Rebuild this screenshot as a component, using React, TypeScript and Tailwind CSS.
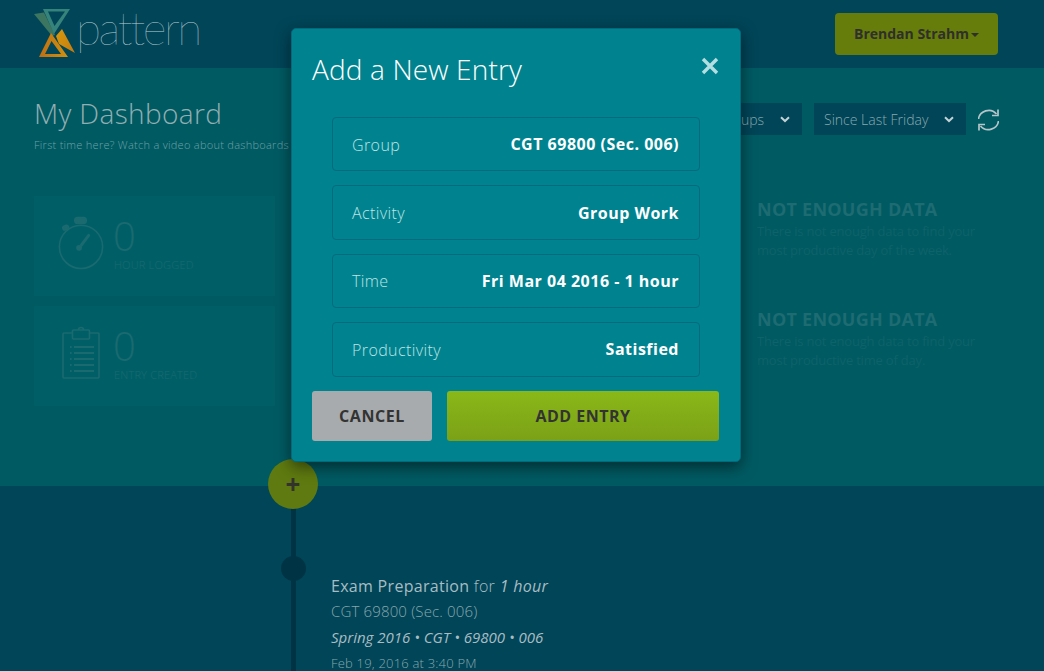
import React from "react";

const Chevron = () => (
  <svg width="10" height="7" viewBox="0 0 10 7" fill="none" stroke="currentColor" strokeWidth="2">
    <path d="M1 1.2 L5 5 L9 1.2" />
  </svg>
);

const Logo = () => (
  <svg width="44" height="50" viewBox="0 0 44 50" className="shrink-0">
    <defs>
      <linearGradient id="org" x1="0" y1="0" x2="1" y2="1">
        <stop offset="0" stopColor="#d89a0c" />
        <stop offset="1" stopColor="#c47a10" />
      </linearGradient>
      <linearGradient id="org2" x1="0" y1="0" x2="1" y2="0">
        <stop offset="0" stopColor="#c06e12" />
        <stop offset="1" stopColor="#cf9210" />
      </linearGradient>
    </defs>
    <path d="M0 5 L10 3.5 L21 26 L18 27 Z" fill="#3c7560" />
    <path fillRule="evenodd" d="M9 0 H36 L20 25 Z M14 2.5 L20.5 17 L31 2.5 Z" fill="#35837b" />
    <path d="M28 20 L41 44 L25 35 L22 27 Z" fill="url(#org)" />
    <path fillRule="evenodd" d="M17 24 L34 48 H5 Z M17.5 32 L11 45 H27 Z" fill="url(#org2)" />
  </svg>
);

const Stopwatch = () => (
  <svg width="50" height="56" viewBox="0 0 50 56" fill="none" stroke="#1b6a70" strokeWidth="1.6" className="mb-[6px]">
    <circle cx="25" cy="32" r="22.5" />
    <rect x="18.5" y="1.5" width="12" height="6" rx="3" fill="#1b6a70" />
    <rect x="6" y="10" width="6" height="4" rx="2" fill="#1b6a70" transform="rotate(-25 9 12)" />
    <path d="M24 32 L33 20" strokeWidth="3" strokeLinecap="round" />
    <circle cx="23" cy="33" r="3" fill="#1b6a70" stroke="none" />
  </svg>
);

const Clipboard = () => (
  <svg width="38" height="54" viewBox="0 0 38 54" fill="none" stroke="#1b6a70" strokeWidth="1.6" className="mb-[9px]">
    <rect x="1" y="8" width="36" height="45" rx="1" />
    <rect x="10.5" y="5" width="17" height="9" rx="1" fill="#005f66" />
    <path d="M16.5 5 a2.5 2.5 0 0 1 5 0" />
    {[22, 28, 34, 40, 46].map((y) => (
      <React.Fragment key={y}>
        <path d={"M12 " + y + " H32"} strokeWidth="2" />
        <path d={"M8 " + y + " H9.6"} strokeWidth="2" />
      </React.Fragment>
    ))}
  </svg>
);

const Refresh = () => (
  <svg width="21" height="24" viewBox="0 0 21 24" fill="none" stroke="#b4c6ca" strokeWidth="1.7" className="mt-[2px]">
    <path d="M0.5 11 C1.5 3 12.5 -1 18.5 6" />
    <path d="M20 1.5 V7.5 H14" />
    <path d="M20.5 13 C19.5 21 8.5 25 2.5 18" />
    <path d="M1 22.5 V16.5 H7" />
  </svg>
);

function Field({ label, value }: { label: string; value: string }) {
  return (
    <div className="flex h-[54.4px] items-center justify-between rounded-[4px] border border-[#006a7e] pl-[19px] pr-5">
      <span className="mt-[1px] text-base font-light tracking-[0.4px] text-[#bfe3e6]">{label}</span>
      <span className="text-base font-bold tracking-[0.5px] text-white">{value}</span>
    </div>
  );
}

function Stat({ icon, value, label }: { icon: React.ReactNode; value: string; label: string }) {
  return (
    <div className="flex h-[100px] w-[241px] items-center gap-[8px] bg-[#005f66] pl-[23px]">
      <div className="flex w-[48px] justify-center">{icon}</div>
      <div className="mb-[5px] flex flex-col">
        <span className="text-[40px] leading-[40px] font-light text-[#1b6a70]">{value}</span>
        <span className="mt-[2px] ml-[1px] text-[11px] leading-[14px] font-light tracking-[0.2px] text-[#1b6a70]">{label}</span>
      </div>
    </div>
  );
}

function Insight({ text }: { text: string }) {
  return (
    <div className="flex w-[240px] flex-col">
      <h3 className="text-lg leading-[20px] font-bold tracking-[0.25px] text-[#1e6b72]">NOT ENOUGH DATA</h3>
      <p className="mt-[3px] text-[13px] leading-[19px] tracking-[-0.2px] text-[#0e6269]">{text}</p>
    </div>
  );
}

export default function App() {
  return (
    <div
      className="relative flex h-[671px] w-[1044px] flex-col overflow-hidden bg-[#004558]"
      style={{ fontFamily: '"Open Sans", sans-serif' }}
    >
      <header className="flex h-[68px] shrink-0 items-start justify-between pr-[46px] pl-[34px] pt-[9px]">
        <div className="flex items-start">
          <Logo />
          <span className="mt-[-9px] ml-[-2px] text-[46px] leading-[56px] font-thin tracking-[-2.5px] text-[#bccbd0]" style={{ fontFamily: 'Lato, sans-serif' }}>
            pattern
          </span>
        </div>
        <button className="mt-1 flex h-[42px] w-[163px] items-center justify-center gap-[2px] rounded-[4px] bg-[#677d0b] text-sm font-bold text-[#2f2f2b]">
          Brendan Strahm
          <span className="mt-[1px] h-0 w-0 border-x-[4px] border-t-[4px] border-x-transparent border-t-[#2f2f2b]" />
        </button>
      </header>

      <section className="h-[418px] shrink-0 bg-[#005a62] px-[34px] pt-[26px]">
        <div className="flex h-[70px] items-start justify-between pr-[11px]">
          <div>
            <h1 className="text-[28px] leading-[38px] font-light tracking-[0.35px] text-[#93aeb2]">My Dashboard</h1>
            <p className="mt-[5px] text-[11px] leading-[15px] font-light tracking-[0.28px] text-[#6fa0a6]">
              First time here? Watch a video about dashboards
            </p>
          </div>
          <div className="mt-[9px] flex items-center gap-3">
            <div className="flex h-8 w-[150px] items-center justify-end gap-4 bg-[#004558] pr-3 text-sm font-light text-[#8aa8ae]">
              <span className="mt-[1px]">All Groups</span>
              <span className="text-[#c3d2d6]"><Chevron /></span>
            </div>
            <div className="flex h-8 w-[152px] items-center justify-between bg-[#004558] pr-3 pl-[10px] text-sm font-light text-[#8aa8ae]">
              <span className="mt-[1px]">Since Last Friday</span>
              <span className="text-[#c3d2d6]"><Chevron /></span>
            </div>
            <Refresh />
          </div>
        </div>
        <div className="mt-[32px] flex justify-between pr-[13px]">
          <div className="flex flex-col gap-[10px]">
            <Stat icon={<Stopwatch />} value="0" label="HOUR LOGGED" />
            <Stat icon={<Clipboard />} value="0" label="ENTRY CREATED" />
          </div>
          <div className="flex flex-col gap-[49px] pt-[3px]">
            <Insight text="There is not enough data to find your most productive day of the week." />
            <Insight text="There is not enough data to find your most productive time of day." />
          </div>
        </div>
      </section>

      <section className="relative flex-1 pl-[331px]">
        <div className="absolute top-0 bottom-0 left-[291px] w-[5px] bg-[#003444]" />
        <div className="absolute top-[-27px] left-[268px] flex h-[50px] w-[50px] items-center justify-center rounded-full bg-[#5f7a10] text-[26px] font-bold text-[#33332d]">
          +
        </div>
        <div className="absolute top-[70px] left-[281px] h-[25px] w-[25px] rounded-full bg-[#003444]" />
        <div className="pt-[88px]">
          <p className="text-base leading-[24px] tracking-[0.3px] text-[#a9bcc2]">
            Exam Preparation <span className="font-light">for</span> <em>1 hour</em>
          </p>
          <p className="text-[15px] leading-[26px] font-light tracking-[0.15px] text-[#8aa5ab]">CGT 69800 (Sec. 006)</p>
          <p className="text-[15px] leading-[26px] italic text-[#a9bcc2]">Spring 2016 • CGT • 69800 • 006</p>
          <p className="text-[13px] leading-[26px] font-light tracking-[0.2px] text-[#8aa5ab]">Feb 19, 2016 at 3:40 PM</p>
        </div>
      </section>

      <div className="absolute top-[28px] left-[291px] flex h-[434px] w-[450px] flex-col rounded-[5px] border border-[#006a7e] bg-[#00838f] px-5 shadow-[0_5px_15px_rgba(0,0,0,0.5)]">
        <div className="flex h-[88px] items-start justify-between pt-[19px]">
          <h2 className="text-[28px] leading-[42px] font-light tracking-[0.15px] text-white">Add a New Entry</h2>
          <svg width="18" height="18" viewBox="0 0 18 18" className="mt-[9px] mr-[1px]" stroke="#b4dfe2" strokeWidth="3.4">
            <path d="M2 2 L16 16 M16 2 L2 16" />
          </svg>
        </div>
        <div className="flex flex-col gap-[14px] px-5">
          <Field label="Group" value="CGT 69800 (Sec. 006)" />
          <Field label="Activity" value="Group Work" />
          <Field label="Time" value="Fri Mar 04 2016 - 1 hour" />
          <Field label="Productivity" value="Satisfied" />
        </div>
        <div className="mt-[14.4px] flex gap-[15px]">
          <button className="h-[50px] w-[120px] rounded-[3px] bg-[#a7abad] text-base font-bold tracking-[0.6px] text-[#333333]">CANCEL</button>
          <button className="h-[50px] w-[272px] rounded-[3px] bg-gradient-to-b from-[#8ab818] to-[#7ba117] text-base font-bold tracking-[0.5px] text-[#333333]">ADD ENTRY</button>
        </div>
      </div>
    </div>
  );
}
